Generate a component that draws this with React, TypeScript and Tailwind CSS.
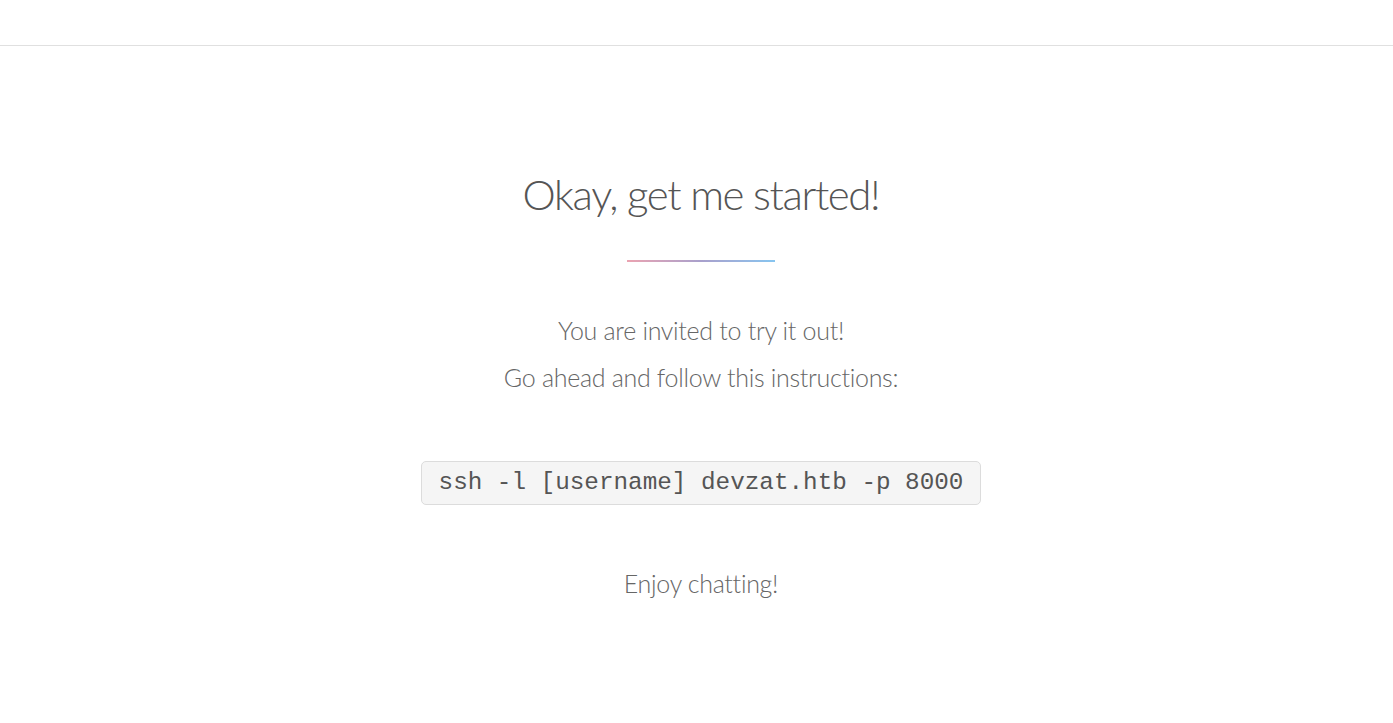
export default function App() {
  return (
    <div className="min-h-screen bg-white text-[#555]">
      <div className="h-[46px] border-b border-[#e0e0e0]" />
      <section className="flex flex-col items-center pl-[9px] pt-[122px] text-center">
        <h2 className="font-['Lato',sans-serif] text-[42px] font-light leading-[52px] tracking-[-1.4px] text-[#555]">
          Okay, get me started!
        </h2>
        <div className="mt-[40px] h-[2px] w-[148px] bg-gradient-to-r from-[#eba3b1] via-[#a8a0cc] to-[#86c5f0]" />
        <div className="mt-[45px] font-['Lato',sans-serif] text-[25px] font-light leading-[47px] tracking-[-0.3px] text-[#666]">
          <p>You are invited to try it out!</p>
          <p>Go ahead and follow this instructions:</p>
        </div>
        <pre className="mt-[60px] rounded-[5px] border border-[#dcdcdc] bg-[#f5f5f5] px-[17px] py-[6px] font-['Liberation_Mono',monospace] text-[24.3px] leading-[30px] text-[#555]">
          ssh -l [username] devzat.htb -p 8000
        </pre>
        <p className="mt-[55px] font-['Lato',sans-serif] text-[25px] font-light leading-[47px] tracking-[-0.3px] text-[#666]">
          Enjoy chatting!
        </p>
      </section>
    </div>
  );
}
